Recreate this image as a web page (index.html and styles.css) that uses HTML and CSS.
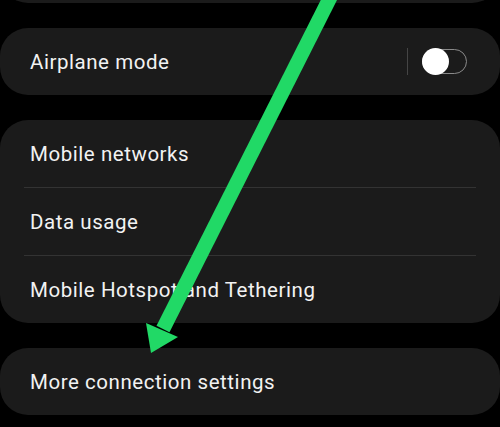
FILE: index.html
```html
<!DOCTYPE html>
<html>
<head>
<meta charset="utf-8">
<link rel="stylesheet" href="styles.css">
</head>
<body>
<div class="page">
  <div class="card card-top"></div>
  <div class="card">
    <div class="row">
      <span class="label">Airplane mode</span>
      <span class="vdiv"></span>
      <span class="switch"><span class="knob"></span></span>
    </div>
  </div>
  <div class="card">
    <div class="row"><span class="label">Mobile networks</span></div>
    <div class="hdiv"></div>
    <div class="row"><span class="label">Data usage</span></div>
    <div class="hdiv"></div>
    <div class="row"><span class="label">Mobile Hotspot and Tethering</span></div>
  </div>
  <div class="card">
    <div class="row"><span class="label">More connection settings</span></div>
  </div>
  <svg class="arrow" width="500" height="427" viewBox="0 0 500 427">
    <line x1="340" y1="-22" x2="163" y2="329" stroke="#21d966" stroke-width="14.5"/>
    <polygon points="151,353 146,323 178,337" fill="#21d966"/>
  </svg>
</div>
</body>
</html>
```
FILE: styles.css
```css
html, body {
  margin: 0;
  padding: 0;
  background: #000;
}
body {
  width: 500px;
  height: 427px;
  overflow: hidden;
  font-family: Roboto, "Noto Sans", sans-serif;
}
.page {
  position: relative;
  display: flex;
  flex-direction: column;
  gap: 25px;
  height: 427px;
}
.card {
  background: #1b1b1b;
  border-radius: 28px;
  display: flex;
  flex-direction: column;
}
.card-top {
  margin-top: -64px;
  height: 67px;
  flex: none;
}
.row {
  height: 67px;
  display: flex;
  align-items: center;
  padding: 0 33px 0 30px;
}
.label {
  flex: 1;
  color: #f2f2f2;
  font-size: 20.5px;
  letter-spacing: 0.55px;
}
.hdiv {
  height: 1px;
  background: #333;
  margin: 0 24px;
}
.vdiv {
  width: 1px;
  height: 27px;
  background: #454545;
  margin-right: 14px;
}
.switch {
  position: relative;
  box-sizing: border-box;
  width: 45px;
  height: 25px;
  border: 1.5px solid #8a8a8a;
  border-radius: 13px;
}
.knob {
  position: absolute;
  left: -1.5px;
  top: -2.5px;
  width: 27px;
  height: 27px;
  border-radius: 50%;
  background: #fff;
}
.arrow {
  position: absolute;
  left: 0;
  top: 0;
  pointer-events: none;
}
```
